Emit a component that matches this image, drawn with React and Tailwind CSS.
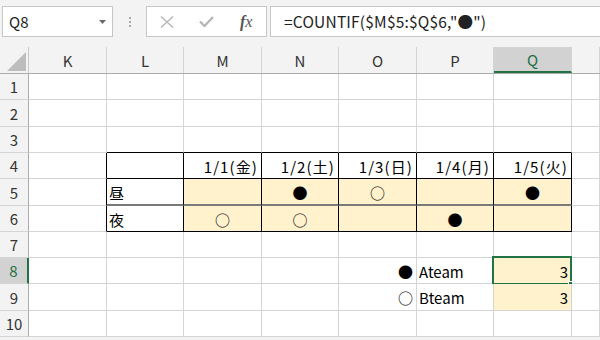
import React from 'react';

const FONT = { fontFamily: '"Noto Sans CJK JP", "Noto Sans", sans-serif' };

// last column only peeks in at the right edge, its letter is off screen
const cols = [
  { name: 'K', w: 'w-[78px]' },
  { name: 'L', w: 'w-[77px]' },
  { name: 'M', w: 'w-[78px]' },
  { name: 'N', w: 'w-[77px]' },
  { name: 'O', w: 'w-[78px]' },
  { name: 'P', w: 'w-[77px]' },
  { name: 'Q', w: 'w-[78px]' },
  { name: 'R', w: 'flex-1', hideLabel: true },
];

const rowHeights = ['h-[26px]', 'h-[27px]', 'h-[26px]', 'h-[26px]', 'h-[27px]', 'h-[26px]', 'h-[26px]', 'h-[26px]', 'h-[27px]', 'h-[26px]'];

// cell contents keyed by row + column
const cells = {
  '4L': { text: '' },
  '4M': { text: '1/1(金)', align: 'right', wide: true },
  '4N': { text: '1/2(土)', align: 'right', wide: true },
  '4O': { text: '1/3(日)', align: 'right', wide: true },
  '4P': { text: '1/4(月)', align: 'right', wide: true },
  '4Q': { text: '1/5(火)', align: 'right', wide: true },
  '5L': { text: '昼', align: 'left' },
  '5M': { text: '', fill: true },
  '5N': { text: '●', align: 'center', fill: true },
  '5O': { text: '○', align: 'center', fill: true },
  '5P': { text: '', fill: true },
  '5Q': { text: '●', align: 'center', fill: true },
  '6L': { text: '夜', align: 'left' },
  '6M': { text: '○', align: 'center', fill: true },
  '6N': { text: '○', align: 'center', fill: true },
  '6O': { text: '', fill: true },
  '6P': { text: '●', align: 'center', fill: true },
  '6Q': { text: '', fill: true },
  '8O': { text: '●', align: 'right' },
  '8P': { text: 'Ateam', align: 'left' },
  '8Q': { text: '3', align: 'right', fill: true },
  '9O': { text: '○', align: 'right' },
  '9P': { text: 'Bteam', align: 'left' },
  '9Q': { text: '3', align: 'right', fill: true },
};

const tableCols = ['L', 'M', 'N', 'O', 'P', 'Q'];

function borderClasses(row, col) {
  const inTableRows = row >= 4 && row <= 6;
  const rightBlack = inTableRows && col !== 'R';
  let bottom = 'border-b border-b-[#d4d4d4]';
  if (tableCols.includes(col)) {
    if (row === 3 || row === 4 || row === 6) bottom = 'border-b border-b-black';
    if (row === 5) bottom = 'border-b-2 border-b-[#7a7a7a]';
  }
  const right = rightBlack ? 'border-r border-r-black' : 'border-r border-r-[#d4d4d4]';
  return `${right} ${bottom}`;
}

function Cell({ row, col }) {
  const c = cells[`${row}${col.name}`] || {};
  const justify =
    c.align === 'right' ? 'justify-end pr-[3px]' : c.align === 'center' ? 'justify-center' : 'justify-start pl-[2px]';
  const selected = row === 8 && col.name === 'Q';
  return (
    <div
      className={`${col.w} h-full shrink-0 flex items-center ${justify} ${borderClasses(row, col.name)} ${
        c.fill ? 'bg-[#fff2cc]' : 'bg-white'
      } text-[15px] text-black relative`}
    >
      <span className={`leading-none pt-[1px] ${c.wide ? 'tracking-[1.1px]' : ''}`}>{c.text}</span>
      {selected && (
        <>
          <div className="absolute -left-[2px] -top-[2px] -right-[1px] -bottom-[2px] border-2 border-[#217346] pointer-events-none" />
          <div className="absolute -right-[3px] -bottom-[4px] w-[6px] h-[6px] bg-[#217346] border border-white" />
        </>
      )}
    </div>
  );
}

const App = () => {
  return (
    <div className="w-[600px] h-[340px] overflow-hidden bg-[#f3f3f3] select-none" style={FONT}>
      {/* formula bar */}
      <div className="h-[47px] flex items-start pt-[6px] pl-[2px]">
        <div className="w-[111px] h-[31px] bg-white border border-[#c6c6c6] flex items-center justify-between pl-[6px] pr-[6px]">
          <span className="text-[15px] text-[#222] leading-none">Q8</span>
          <svg width="7" height="4" viewBox="0 0 7 4">
            <path d="M0 0 L7 0 L3.5 4 Z" fill="#6a6a6a" />
          </svg>
        </div>
        <div className="w-[33px] h-[31px] flex flex-col items-center justify-center gap-[2px]">
          <span className="w-[2px] h-[2px] bg-[#a8a8a8]" />
          <span className="w-[2px] h-[2px] bg-[#a8a8a8]" />
          <span className="w-[2px] h-[2px] bg-[#a8a8a8]" />
        </div>
        <div className="w-[121px] h-[31px] bg-white border border-[#c6c6c6] flex items-center">
          <div className="w-[40px] flex justify-center">
            <svg width="14" height="12" viewBox="0 0 14 12">
              <path d="M1 0.5 L13 11.5 M13 0.5 L1 11.5" stroke="#b4b4b4" strokeWidth="1.3" />
            </svg>
          </div>
          <div className="w-[40px] flex justify-center">
            <svg width="15" height="11" viewBox="0 0 15 11">
              <path d="M1 5.5 L5.5 10 L14 1" stroke="#b4b4b4" strokeWidth="2.2" fill="none" />
            </svg>
          </div>
          <div className="w-[40px] flex justify-center">
            <span
              className="text-[16px] italic text-[#555] leading-none"
              style={{ fontFamily: '"Liberation Serif", serif' }}
            >
              <span className="font-bold">f</span>x
            </span>
          </div>
        </div>
        <div className="ml-[3px] flex-1 h-[31px] bg-white border border-[#c6c6c6] border-r-0 flex items-center pl-[13px]">
          <span className="text-[15.5px] text-[#222] leading-none tracking-[0.2px]">=COUNTIF($M$5:$Q$6,"●")</span>
        </div>
      </div>

      {/* column header */}
      <div className="flex h-[27px] border-b border-[#ababab]">
        <div className="w-[29px] shrink-0 h-full border-r border-[#c8c8c8] flex items-end justify-end pr-[2px] pb-[2px]">
          <svg width="19" height="19" viewBox="0 0 19 19">
            <path d="M19 0 L19 19 L0 19 Z" fill="#bdbdbd" />
          </svg>
        </div>
        {cols.map((col) => (
          <div
            key={col.name}
            className={`${col.w} shrink-0 h-full flex items-center justify-center border-r border-[#d4d4d4] text-[15px] leading-none ${
              col.name === 'Q' ? 'bg-[#d2d2d2] text-[#1e6e42] border-b-2 border-b-[#217346]' : 'text-[#333]'
            }`}
          >
            {col.hideLabel ? '' : col.name}
          </div>
        ))}
      </div>

      {/* rows */}
      {rowHeights.map((h, i) => {
        const row = i + 1;
        const isSel = row === 8;
        return (
          <div key={row} className={`flex ${h}`}>
            <div
              className={`w-[29px] shrink-0 h-full flex items-center justify-center border-b border-b-[#d4d4d4] text-[15px] leading-none ${
                isSel
                  ? 'bg-[#d2d2d2] text-[#1e6e42] border-r-2 border-r-[#217346]'
                  : 'bg-[#f3f3f3] text-[#333] border-r border-r-[#ababab]'
              }`}
            >
              {row}
            </div>
            {cols.map((col) => (
              <Cell key={col.name} row={row} col={col} />
            ))}
          </div>
        );
      })}
    </div>
  );
};

export default App;
